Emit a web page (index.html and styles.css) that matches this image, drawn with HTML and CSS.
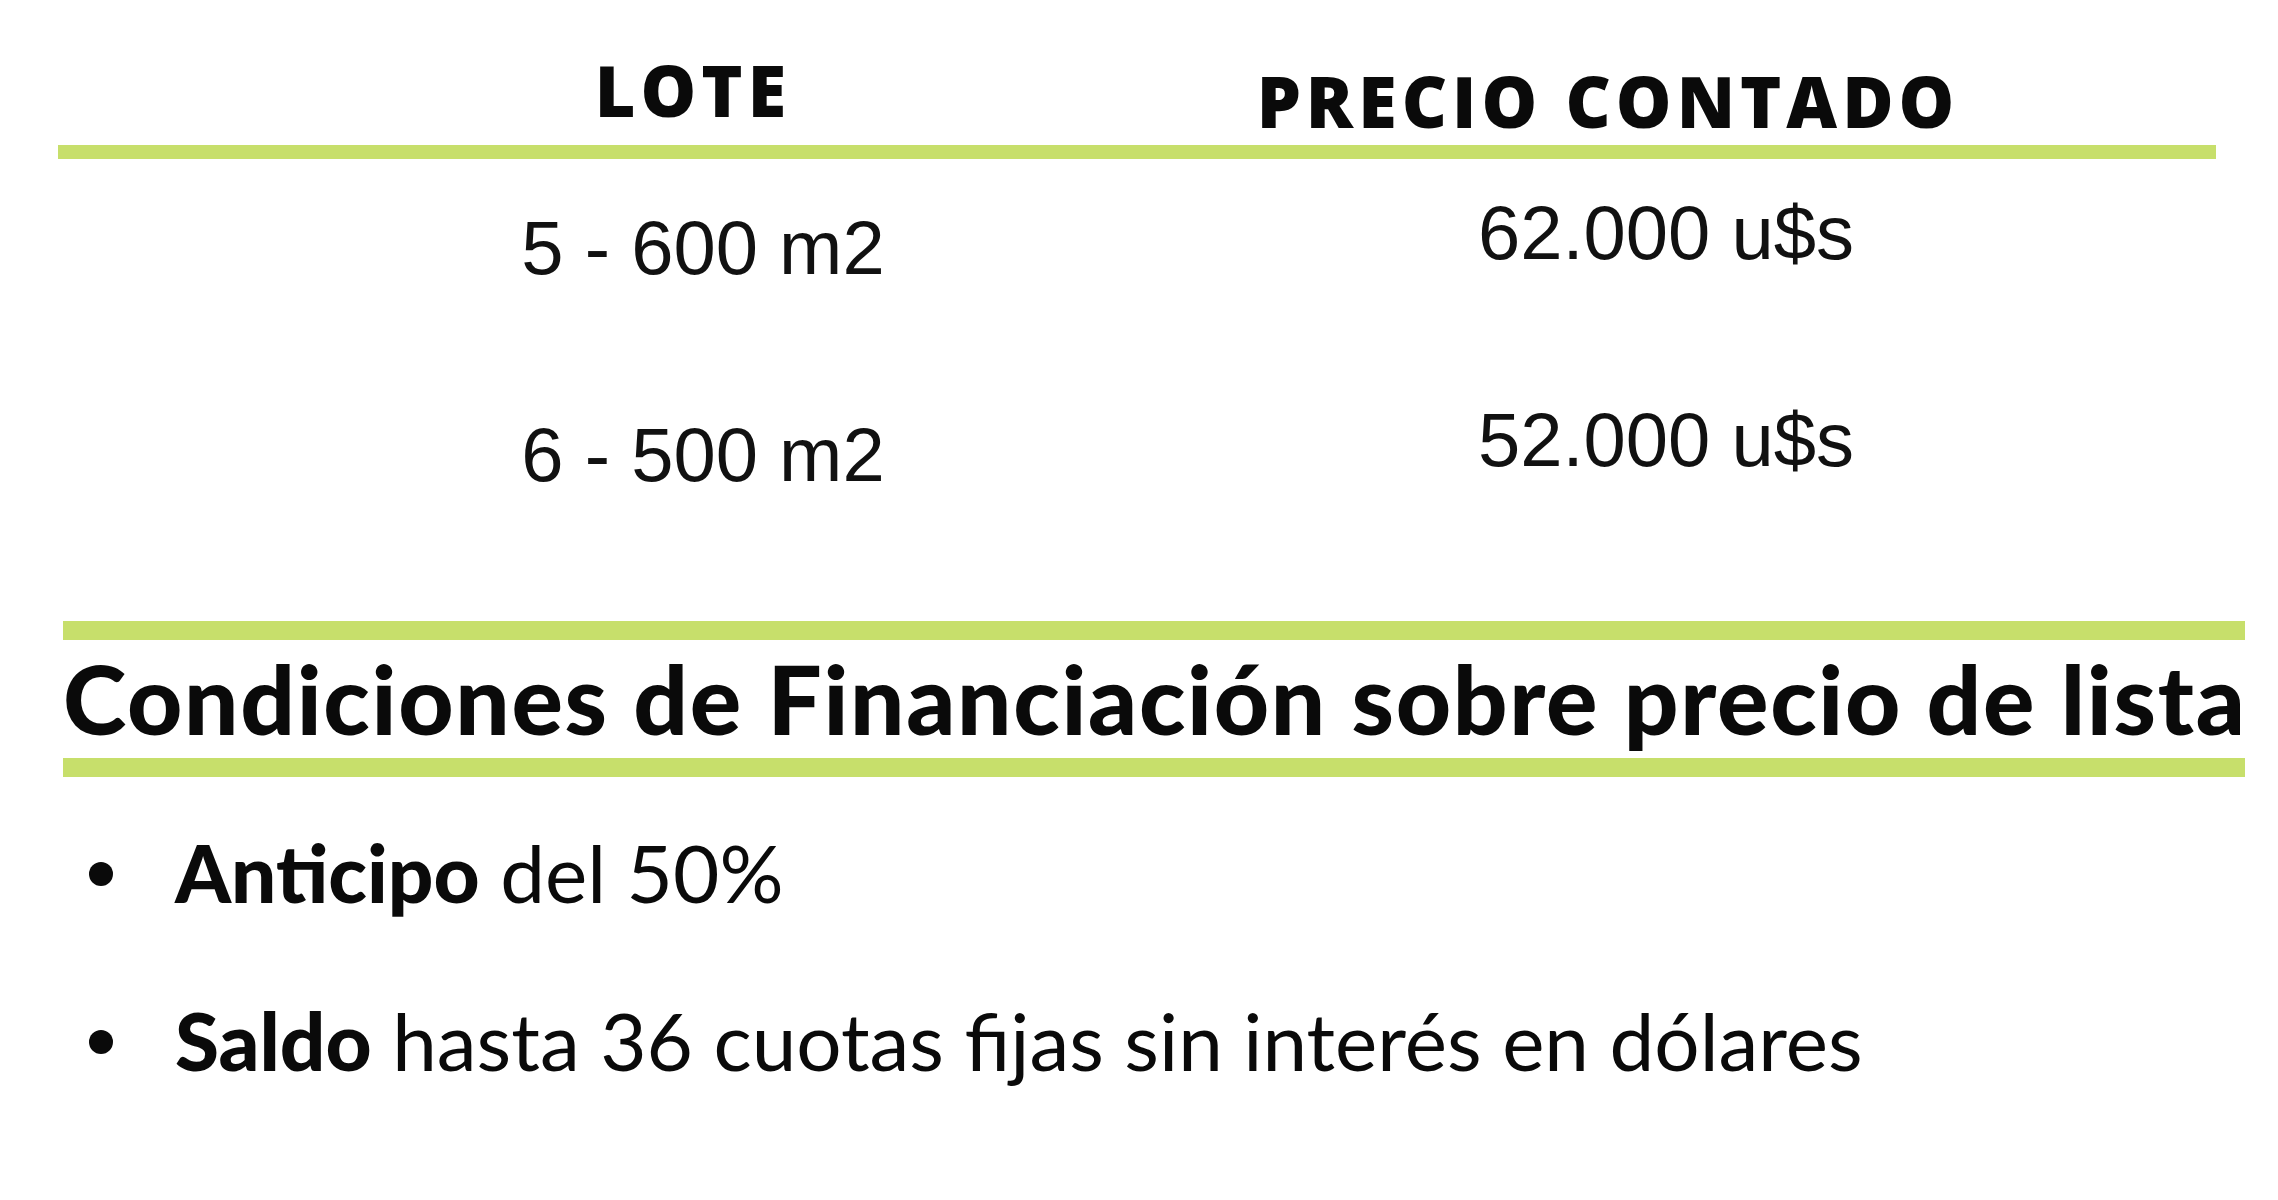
FILE: index.html
```html
<!DOCTYPE html>
<html lang="es">
<head>
<meta charset="utf-8">
<title>Lotes - Precios</title>
<link rel="stylesheet" href="styles.css">
</head>
<body>
<main class="page">
  <section class="price-table">
    <div class="row head">
      <div class="cell lote">LOTE</div>
      <div class="cell precio">PRECIO CONTADO</div>
    </div>
    <div class="row val">
      <div class="cell lote">5 - 600 m2</div>
      <div class="cell precio">62.000 u$s</div>
    </div>
    <div class="row val">
      <div class="cell lote">6 - 500 m2</div>
      <div class="cell precio">52.000 u$s</div>
    </div>
  </section>
  <section class="fin">
    <h2 class="fin-title">Condiciones de Financiación sobre precio de lista</h2>
    <ul class="fin-list">
      <li><span><b>Anticipo</b> del 50%</span></li>
      <li><span><b>Saldo</b> hasta 36 cuotas fijas sin interés en dólares</span></li>
    </ul>
  </section>
</main>
</body>
</html>
```

FILE: styles.css
```css
html, body {
  margin: 0;
  padding: 0;
  background: #ffffff;
}

.page {
  width: 2278px;
  height: 1200px;
  padding-top: 55px;
  box-sizing: border-box;
  color: #0a0a0a;
}

.price-table {
  margin-left: 58px;
  width: 2158px;
}

.row {
  display: flex;
}

.cell {
  text-align: center;
  white-space: nowrap;
}

.head {
  align-items: flex-end;
  padding-left: 80px;
  border-bottom: 14px solid #c7df6b;
}

.head .cell {
  font-family: "Open Sans", sans-serif;
  font-weight: 800;
  font-size: 70px;
  line-height: 1;
  letter-spacing: 5px;
}

.head .lote {
  width: 1110px;
  padding-bottom: 20px;
}

.head .precio {
  width: 720px;
  padding-bottom: 9px;
}

.val {
  height: 207px;
  align-items: flex-start;
}

.val .cell {
  font-family: "Liberation Sans", Arial, sans-serif;
  font-size: 76px;
  line-height: 1;
  color: #111;
}

.val .lote {
  width: 1290px;
  padding-top: 51px;
}

.val .precio {
  width: 636px;
  padding-top: 36px;
}

.fin {
  margin-top: 48px;
  margin-left: 63px;
  width: 2182px;
}

.fin-title {
  margin: 0;
  padding: 10px 0 12px;
  border-top: 19px solid #c7df6b;
  border-bottom: 19px solid #c7df6b;
  font-family: Lato, sans-serif;
  font-weight: 900;
  font-size: 96px;
  line-height: 1;
  letter-spacing: 1.7px;
  white-space: nowrap;
}

.fin-list {
  list-style: none;
  margin: 55px 0 0 -63px;
  padding: 0;
}

.fin-list li {
  display: flex;
  align-items: center;
  height: 80px;
  margin-bottom: 88px;
  font-family: Lato, sans-serif;
  font-size: 80px;
  line-height: 1;
  white-space: nowrap;
}

.fin-list li::before {
  content: "";
  flex: none;
  width: 24px;
  height: 24px;
  border-radius: 50%;
  background: #0a0a0a;
  margin-left: 89px;
  margin-right: 62px;
  position: relative;
  top: 2px;
}

.fin-list b {
  font-weight: 900;
}
```
